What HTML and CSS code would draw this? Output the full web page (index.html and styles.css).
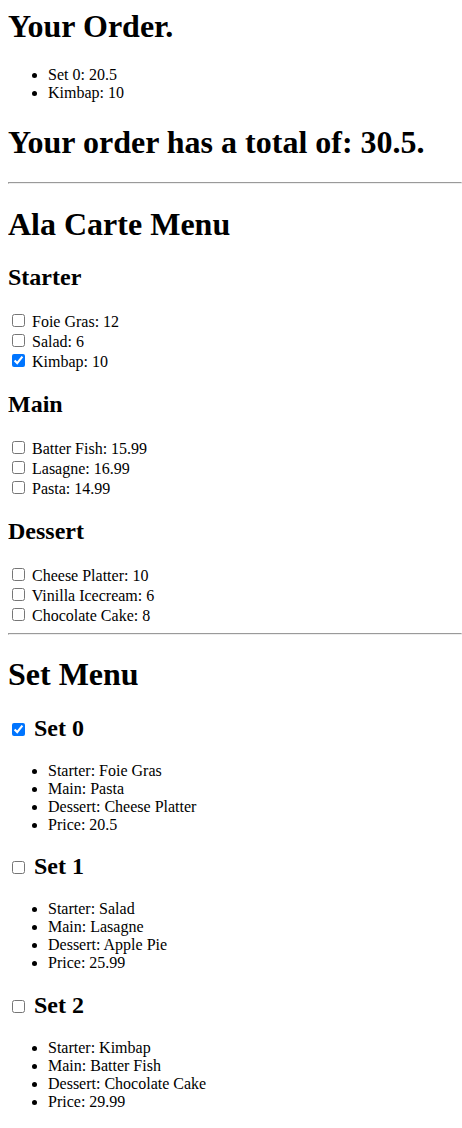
FILE: index.html
```html
<html>

<head>
    <link rel="stylesheet" href="styles.css">
</head>

<body>
    <h1>Your Order.</h1>
    <ul>
        <li>Set 0: 20.5</li>
        <li>Kimbap: 10</li>
    </ul>
    <h1>Your order has a total of: 30.5.</h1>
    <hr />

    <h1>Ala Carte Menu</h1>
    <h2>Starter</h2>
    <div><input type="checkbox" /> Foie Gras: 12</div>
    <div><input type="checkbox" /> Salad: 6</div>
    <div><input type="checkbox" checked /> Kimbap: 10</div>
    <h2>Main</h2>
    <div><input type="checkbox" /> Batter Fish: 15.99</div>
    <div><input type="checkbox" /> Lasagne: 16.99</div>
    <div><input type="checkbox" /> Pasta: 14.99</div>
    <h2>Dessert</h2>
    <div><input type="checkbox" /> Cheese Platter: 10</div>
    <div><input type="checkbox" /> Vinilla Icecream: 6</div>
    <div><input type="checkbox" /> Chocolate Cake: 8</div>
    <hr />

    <h1>Set Menu</h1>
    <h2><input type="checkbox" checked /> Set 0</h2>
    <ul>
        <li>Starter: Foie Gras</li>
        <li>Main: Pasta</li>
        <li>Dessert: Cheese Platter</li>
        <li>Price: 20.5</li>
    </ul>
    <h2><input type="checkbox" /> Set 1</h2>
    <ul>
        <li>Starter: Salad</li>
        <li>Main: Lasagne</li>
        <li>Dessert: Apple Pie</li>
        <li>Price: 25.99</li>
    </ul>
    <h2><input type="checkbox" /> Set 2</h2>
    <ul>
        <li>Starter: Kimbap</li>
        <li>Main: Batter Fish</li>
        <li>Dessert: Chocolate Cake</li>
        <li>Price: 29.99</li>
    </ul>
</body>

</html>
```
FILE: styles.css
```css
body {
    font-family: "Liberation Serif", serif;
    margin-right: 0;
}
```
